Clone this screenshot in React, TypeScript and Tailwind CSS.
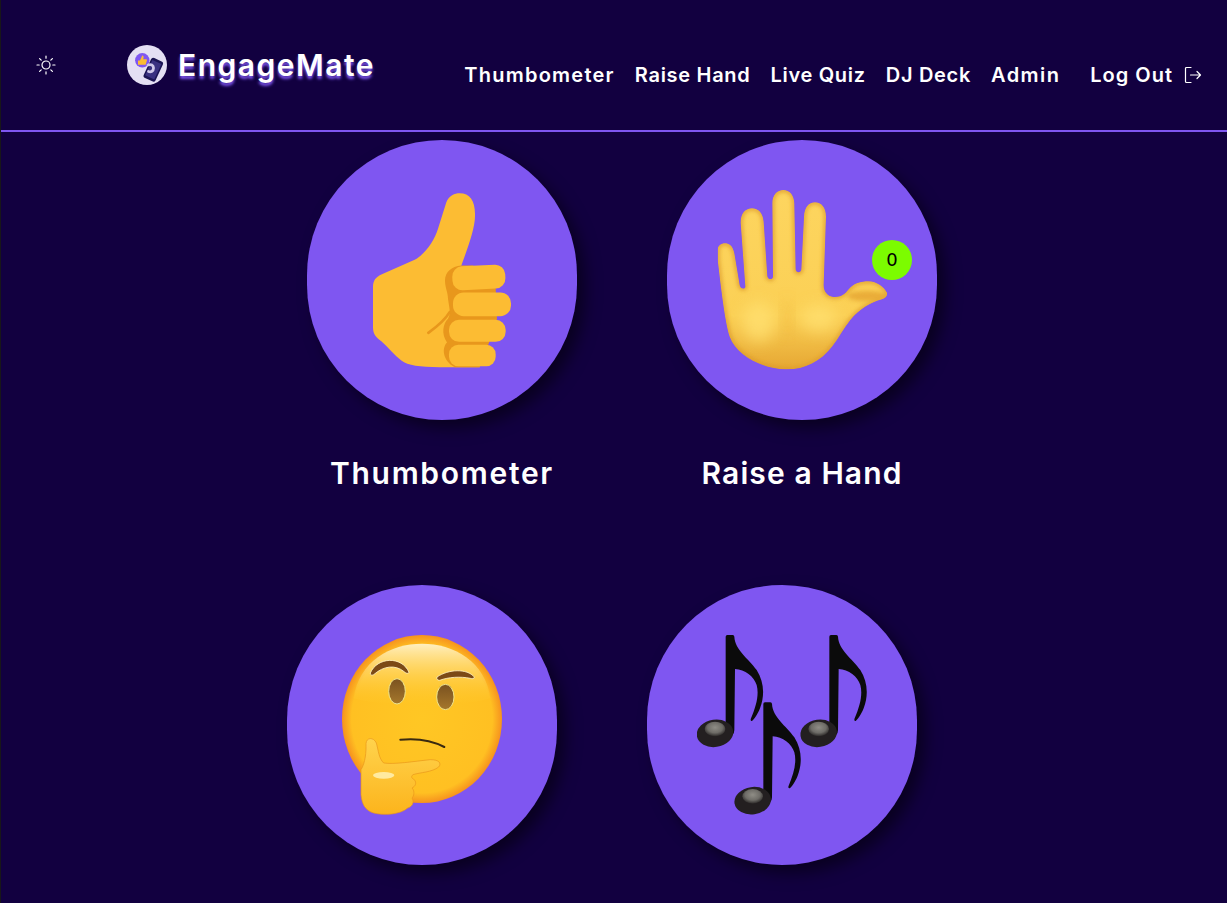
const NAV_LINKS = [
  { label: "Thumbometer", spacing: "tracking-[1.25px]" },
  { label: "Raise Hand", spacing: "tracking-[0.7px]" },
  { label: "Live Quiz", spacing: "tracking-[0.7px]" },
  { label: "DJ Deck", spacing: "tracking-[0.7px]" },
  { label: "Admin", spacing: "tracking-[1.4px]" },
];

const HAND_PATH =
  "M82,240 C82,225 95,218 108,220 C122,222 130,235 133,255 L148,345 C150,358 165,358 165,350 L151,160 C150,130 165,115 185,115 C205,115 218,130 220,155 L231,318 C232,330 247,330 248,320 L246,100 C246,75 260,60 279,60 C298,60 311,75 312,100 L316,298 C317,310 332,310 333,298 L341,140 C342,112 355,97 374,97 C393,97 407,112 407,140 L400,345 C400,365 410,378 430,381 C450,382 462,375 475,358 C490,340 510,334 535,334 C560,335 580,350 590,368 C592,378 585,385 575,388 C540,398 510,415 480,450 C460,475 445,505 425,530 C390,575 340,600 285,598 C220,596 140,560 118,500 C105,460 95,380 82,270 Z";

const NOTE_PATH =
  "M137,50 Q137,45 142,45 L158,45 Q163,45 163,50 C165,90 205,115 230,150 C252,185 255,225 240,265 C232,285 222,298 216,303 C212,303 211,300 213,295 C228,260 238,225 230,195 C222,170 195,148 165,147 L163,330 Q163,350 140,350 L137,340 Z";

function SunIcon() {
  return (
    <svg width="20" height="20" viewBox="0 0 20 20" fill="none" stroke="#ffffff" strokeWidth="1.2" strokeLinecap="round">
      <circle cx="10" cy="10" r="4" />
      <path d="M10 1v2.2M10 16.8V19M1 10h2.2M16.8 10H19M3.6 3.6l1.6 1.6M14.8 14.8l1.6 1.6M3.6 16.4l1.6-1.6M14.8 5.2l1.6-1.6" />
    </svg>
  );
}

function LogoutIcon() {
  return (
    <svg width="20" height="20" viewBox="0 0 20 20" fill="none" stroke="#ffffff" strokeWidth="1.2" strokeLinecap="round" strokeLinejoin="round">
      <path d="M8 2.5H3.5a1 1 0 0 0-1 1v13a1 1 0 0 0 1 1H8" />
      <path d="M7.5 10h10M14 6.5l3.5 3.5-3.5 3.5" />
    </svg>
  );
}

function Logo() {
  return (
    <svg width="40" height="40" viewBox="0 0 40 40">
      <circle cx="20" cy="20" r="20" fill="#e4dff3" />
      <circle cx="15.300" cy="15.300" r="7.200" fill="#7f56f1" />
      <path d="M11 15.500h2l2.200-5c1.300 0 1.600 1 1.400 2l-.4 1.800h2.800c.9 0 1.100.7.900 1.300l-1 3.300c-.2.700-.7.900-1.300.9H11z" fill="#fcbc33" />
      <g transform="rotate(25 26.300 24.700)">
        <rect x="19.800" y="13.700" width="13" height="22" rx="2.500" fill="#1b1453" />
        <rect x="21.300" y="16.200" width="10" height="17" fill="#3a3180" />
      </g>
      <path d="M21 20c3-1 5.500 0 5.500 3s-2.500 4.500-5 3.500" fill="none" stroke="#cfc8e8" strokeWidth="2.800" strokeLinecap="round" />
    </svg>
  );
}

function ThumbsUp() {
  return (
    <svg width="140" height="177" viewBox="97 65 420 530" className="block">
      <path
        d="M100,350 C100,330 108,320 125,312 L225,268 C255,252 285,210 295,175 L320,95 C328,75 345,68 360,68 C390,68 406,90 406,130 C408,170 385,230 365,285 L420,590 L300,590 C240,590 205,585 185,570 C165,555 145,530 125,512 C108,500 100,490 100,470 Z"
        fill="#fcbc33"
      />
      <path
        d="M365,285 C335,288 316,305 316,330 C316,352 325,365 325,385 C328,410 335,428 325,445 C310,460 304,490 322,516 C306,532 308,570 345,590 L420,590 L447,520 L472,445 L468,352 L400,285 Z"
        fill="#e8971c"
      />
      <path d="M330,425 C315,450 290,470 266,487" fill="none" stroke="#e8971c" strokeWidth="8" strokeLinecap="round" />
      <rect x="338" y="285" width="159" height="72" rx="30" fill="#fcbc33" transform="rotate(-3 417 321)" />
      <rect x="340" y="366" width="174" height="71" rx="32" fill="#fcbc33" />
      <rect x="328" y="448" width="170" height="66" rx="30" fill="#fcbc33" />
      <rect x="328" y="523" width="140" height="64" rx="28" fill="#fcbc33" />
    </svg>
  );
}

function RaisedHand() {
  return (
    <svg width="170" height="180" viewBox="80 60 510 540" className="block">
      <defs>
        <clipPath id="handClip">
          <path d={HAND_PATH} />
        </clipPath>
        <filter id="handBlur" x="-30%" y="-30%" width="160%" height="160%">
          <feGaussianBlur stdDeviation="7" />
        </filter>
        <filter id="palmBlur" x="-60%" y="-60%" width="220%" height="220%">
          <feGaussianBlur stdDeviation="22" />
        </filter>
        <linearGradient id="handFill" x1="0" y1="0" x2="0" y2="1">
          <stop offset="0%" stopColor="#fdd55f" />
          <stop offset="70%" stopColor="#fbd055" />
          <stop offset="100%" stopColor="#e6a733" />
        </linearGradient>
      </defs>
      <g clipPath="url(#handClip)">
        <path d={HAND_PATH} fill="url(#handFill)" />
        <path d={HAND_PATH} fill="none" stroke="#dc9a2a" strokeWidth="10" filter="url(#handBlur)" />
        <ellipse cx="205" cy="455" rx="50" ry="60" fill="#ffe071" opacity="0.8" filter="url(#palmBlur)" />
        <ellipse cx="385" cy="445" rx="55" ry="40" fill="#ffe071" opacity="0.8" filter="url(#palmBlur)" />
        <ellipse cx="290" cy="440" rx="12" ry="50" fill="#f0b840" opacity="0.6" filter="url(#palmBlur)" />
        <ellipse cx="530" cy="378" rx="60" ry="16" fill="#e5a430" opacity="0.8" filter="url(#handBlur)" />
      </g>
    </svg>
  );
}

function ThinkingFace() {
  return (
    <svg width="160" height="180" viewBox="65 46 480 540" className="block">
      <defs>
        <radialGradient id="faceFill" cx="50%" cy="50%" r="50%">
          <stop offset="0%" stopColor="#ffc724" />
          <stop offset="88%" stopColor="#ffc022" />
          <stop offset="100%" stopColor="#f6921e" />
        </radialGradient>
        <linearGradient id="faceShine" x1="0" y1="0" x2="0" y2="1">
          <stop offset="0%" stopColor="#ffefc0" />
          <stop offset="100%" stopColor="#ffc724" stopOpacity="0.1" />
        </linearGradient>
        <linearGradient id="eyeFill" x1="0" y1="0" x2="0" y2="1">
          <stop offset="0%" stopColor="#7a5220" />
          <stop offset="100%" stopColor="#a5772c" />
        </linearGradient>
        <linearGradient id="thinkHand" x1="0" y1="0" x2="0" y2="1">
          <stop offset="0%" stopColor="#ffd34d" />
          <stop offset="100%" stopColor="#fcb41c" />
        </linearGradient>
      </defs>
      <ellipse cx="305" cy="298" rx="240" ry="252" fill="url(#faceFill)" />
      <path d="M100,235 C115,125 210,72 305,72 C400,72 495,125 510,235 C450,262 165,262 100,235 Z" fill="url(#faceShine)" />
      <path d="M150,160 C170,112 245,108 266,158 C262,164 256,160 250,155 C225,135 190,138 160,165 C155,168 149,166 150,160 Z" fill="#7c4a16" stroke="#fff3c4" strokeWidth="2.500" />
      <path d="M350,172 C385,148 440,146 462,172 C462,178 456,178 450,176 C420,170 385,172 358,182 C350,182 348,177 350,172 Z" fill="#7c4a16" stroke="#fff3c4" strokeWidth="2.500" />
      <ellipse cx="230" cy="215" rx="25" ry="38" fill="url(#eyeFill)" stroke="#efe58f" strokeWidth="3" />
      <ellipse cx="375" cy="232" rx="26" ry="38" fill="url(#eyeFill)" stroke="#efe58f" strokeWidth="3" />
      <path d="M240,360 C290,355 335,362 372,382" fill="none" stroke="#3a2a10" strokeWidth="6" strokeLinecap="round" />
      <path
        d="M122,450 C135,430 138,395 137,372 C138,352 160,352 168,370 C175,395 175,415 190,430 C220,435 280,425 330,420 C355,420 365,430 355,442 C335,458 300,458 278,465 C272,470 272,475 282,480 C290,490 285,500 275,505 C285,515 280,530 275,535 C283,548 275,562 262,565 C240,585 190,588 160,580 C135,572 125,555 122,525 Z"
        fill="url(#thinkHand)"
        stroke="#e8951a"
        strokeWidth="2"
      />
      <ellipse cx="190" cy="467" rx="32" ry="10" fill="#ffeaa0" />
    </svg>
  );
}

function Note({ dx, dy }: { dx: number; dy: number }) {
  return (
    <g transform={`translate(${dx} ${dy})`}>
      <path d={NOTE_PATH} fill="#0b0b0b" />
      <ellipse cx="105" cy="340" rx="55" ry="41" fill="#231f20" transform="rotate(-8 105 340)" />
      <ellipse cx="105" cy="327" rx="31" ry="22" fill="url(#noteShine)" />
    </g>
  );
}

function MusicNotes() {
  return (
    <svg width="170" height="180" viewBox="51 45 510 540" className="block">
      <defs>
        <radialGradient id="noteShine" cx="50%" cy="40%" r="60%">
          <stop offset="0%" stopColor="#8f8d86" />
          <stop offset="60%" stopColor="#6e6c67" />
          <stop offset="100%" stopColor="#2b2827" />
        </radialGradient>
      </defs>
      <Note dx={0} dy={0} />
      <Note dx={311} dy={0} />
      <Note dx={113} dy={202} />
    </svg>
  );
}

function Card({ label, spacing, badge, children }: { label?: string; spacing?: string; badge?: string; children: React.ReactNode }) {
  return (
    <div className="flex w-[270px] flex-col items-center">
      <div className="relative flex h-[280px] w-[270px] items-center justify-center rounded-full bg-[#7f56f1] shadow-[8px_8px_16px_rgba(0,0,0,0.5)]">
        {children}
        {badge && (
          <span className="absolute right-[25px] top-[100px] flex h-10 w-10 items-center justify-center rounded-full bg-[#7cfc00] font-['DejaVu_Sans',sans-serif] text-[18px] leading-none text-black">
            {badge}
          </span>
        )}
      </div>
      {label && (
        <p className={`mt-[33px] whitespace-nowrap text-[30px] font-semibold leading-10 text-white ${spacing}`}>{label}</p>
      )}
    </div>
  );
}

export default function App() {
  return (
    <div className="h-[903px] overflow-hidden border-l border-[#18161a] bg-[#120040] font-['Inter',sans-serif] text-white">
      <header className="flex h-[132px] border-b-2 border-[#7f56f1] pl-[35px] pr-[24px]">
        <div className="mt-[55px] h-5 w-5">
          <SunIcon />
        </div>
        <div className="ml-[71px] mt-[45px] flex h-10 items-center gap-[11px]">
          <Logo />
          <span className="text-[30px] font-semibold leading-none tracking-[1.5px] [text-shadow:0_3px_3px_#7f56f1]">EngageMate</span>
        </div>
        <nav className="ml-auto mt-[63px] flex h-6 items-center text-[20px] font-semibold leading-6">
          <div className="flex gap-[20px]">
            {NAV_LINKS.map((link) => (
              <a key={link.label} className={`whitespace-nowrap ${link.spacing}`}>
                {link.label}
              </a>
            ))}
          </div>
          <a className="ml-[30px] flex items-center gap-[10px] whitespace-nowrap tracking-[1px]">
            Log Out
            <LogoutIcon />
          </a>
        </nav>
      </header>
      <main className="pt-2">
        <div className="ml-[306px] flex gap-[90px]">
          <Card label="Thumbometer" spacing="tracking-[1.7px]">
            <ThumbsUp />
          </Card>
          <Card label="Raise a Hand" spacing="tracking-[1.1px]" badge="0">
            <RaisedHand />
          </Card>
        </div>
        <div className="ml-[286px] mt-[92px] flex gap-[90px]">
          <Card>
            <ThinkingFace />
          </Card>
          <Card>
            <MusicNotes />
          </Card>
        </div>
      </main>
    </div>
  );
}
